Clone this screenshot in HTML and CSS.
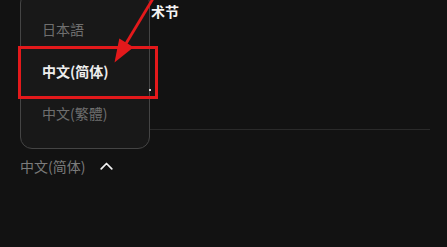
FILE: index.html
```html
<!DOCTYPE html>
<html lang="zh-CN">
<head>
<meta charset="utf-8">
<title>Language menu</title>
<link rel="stylesheet" href="styles.css">
</head>
<body>
<div class="page">
  <div class="title">术节</div>
  <div class="divider"></div>
  <div class="lang-select">
    <span class="lang-current">中文(简体)</span>
    <svg class="chevron" width="13" height="8" viewBox="0 0 13 8"><path d="M1.2 6.8 L6.5 1.5 L11.8 6.8" fill="none" stroke="#f2f2f2" stroke-width="1.7" stroke-linecap="round" stroke-linejoin="round"/></svg>
  </div>

  <ul class="menu">
    <li class="item">日本語</li>
    <li class="item active">中文(简体)</li>
    <li class="item">中文(繁體)</li>
  </ul>

  <div class="highlight"></div>
  <div class="dot"></div>
  <svg class="arrow" width="447" height="247" viewBox="0 0 447 247">
    <line x1="157" y1="-8" x2="126" y2="43.5" stroke="#e3191b" stroke-width="2.8"/>
    <polygon points="114.5,62.5 133.6,47.3 119.3,38.6" fill="#e3191b"/>
  </svg>
</div>
</body>
</html>
```

FILE: styles.css
```css
html, body {
  margin: 0;
  padding: 0;
  background: #121212;
  width: 447px;
  height: 247px;
  overflow: hidden;
}

.page {
  position: relative;
  width: 447px;
  height: 247px;
  padding: 0 17px 0 20px;
  box-sizing: border-box;
  font-family: "Noto Sans CJK SC", "Noto Sans", sans-serif;
  display: flex;
  flex-direction: column;
}

.title {
  margin-left: 131px;
  padding-top: 1px;
  height: 20px;
  line-height: 20px;
  font-size: 14px;
  font-weight: 700;
  color: #f4f4f4;
}

.divider {
  margin-top: 108px;
  height: 1px;
  background: #2a2a2a;
}

.lang-select {
  margin-top: 26px;
  display: flex;
  align-items: center;
  gap: 15px;
  height: 20px;
}

.lang-current {
  font-size: 14px;
  line-height: 20px;
  color: #7b7b7b;
}

.chevron {
  display: block;
  margin-top: -1px;
}

.menu {
  position: absolute;
  left: 20px;
  top: -9px;
  width: 130px;
  box-sizing: border-box;
  margin: 0;
  padding: 16px 0 14px;
  list-style: none;
  background: #181818;
  border: 1px solid #444444;
  border-radius: 12px;
}

.item {
  height: 42px;
  line-height: 42px;
  padding-left: 21px;
  font-size: 14px;
  color: #6f6f6f;
  white-space: nowrap;
}

.item.active {
  color: #ededed;
  font-weight: 700;
}

.highlight {
  position: absolute;
  left: 18px;
  top: 46px;
  width: 140px;
  height: 53px;
  box-sizing: border-box;
  border: 3.5px solid #e3191b;
}

.dot {
  position: absolute;
  left: 149px;
  top: 89px;
  width: 2px;
  height: 2px;
  background: #d8d8d8;
}

.arrow {
  position: absolute;
  left: 0;
  top: 0;
  overflow: visible;
}
```
